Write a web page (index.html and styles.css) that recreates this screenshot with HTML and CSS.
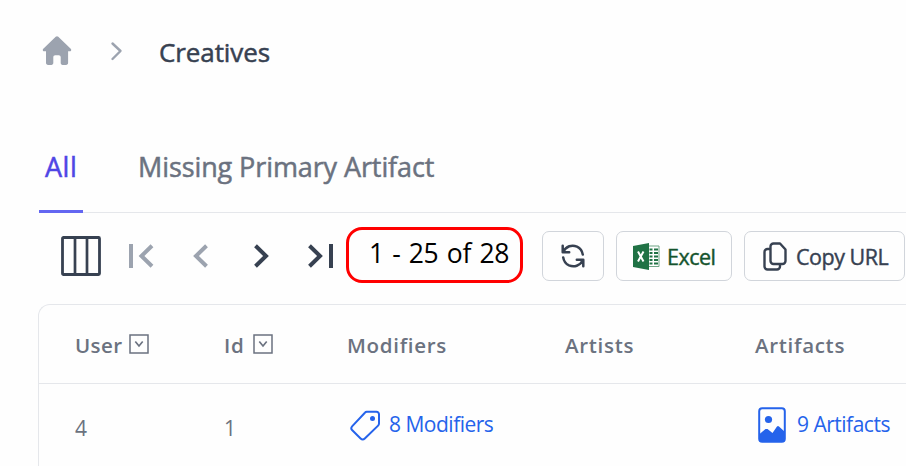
FILE: index.html
```html
<!DOCTYPE html>
<html lang="en">
<head>
<meta charset="utf-8">
<title>Creatives</title>
<link rel="stylesheet" href="styles.css">
</head>
<body>
<nav class="breadcrumb">
  <svg class="home" width="30" height="30" viewBox="0 0 30 30"><path d="M13.700.8a1.900 1.900 0 0 1 2.600 0L28.700 12.700c1 1 .5 2.600-.9 2.600h-1.700v11.500c0 1.300-.8 2.100-2.100 2.100h-3.400c-1.200 0-1.900-.8-1.900-1.900v-5.700c0-1.200-.8-2-1.900-2h-3.600c-1.200 0-1.900.8-1.900 2V27c0 1.100-.8 1.900-1.900 1.900H6.100c-1.300 0-2.100-.8-2.100-2.100V15.300H2.200c-1.400 0-1.900-1.600-.9-2.600z" fill="#9ca3af"/></svg>
  <svg class="crumb-arrow" width="14" height="20" viewBox="0 0 14 20"><path d="M2.500 2.500 10.500 10l-8 8" fill="none" stroke="#9ca3af" stroke-width="2.400" stroke-linecap="round" stroke-linejoin="round"/></svg>
  <span class="crumb">Creatives</span>
</nav>
<div class="tabs">
  <a class="tab tab-active">All</a>
  <a class="tab tab-missing">Missing Primary Artifact</a>
</div>
<div class="toolbar">
  <svg class="columns" width="40" height="40" viewBox="0 0 40 40"><rect x="1.500" y="1.500" width="37" height="37" rx="1" fill="none" stroke="#374151" stroke-width="2.800"/><path d="M14 2v36M26 2v36" stroke="#374151" stroke-width="2.700"/></svg>
  <svg class="first" width="26" height="26" viewBox="0 0 26 26"><path d="M1 1h4v24H1z" fill="#9ca3af"/><path d="M24 2.800 13.500 13l10.500 10.200" fill="none" stroke="#9ca3af" stroke-width="4"/></svg>
  <svg class="prev" width="16" height="26" viewBox="0 0 16 26"><path d="M13.500 2.800 3 13l10.500 10.200" fill="none" stroke="#9ca3af" stroke-width="4"/></svg>
  <svg class="next" width="16" height="26" viewBox="0 0 16 26"><path d="M1.500 2.800 12 13 1.500 23.200" fill="none" stroke="#374151" stroke-width="4"/></svg>
  <svg class="last" width="26" height="26" viewBox="0 0 26 26"><path d="M21 1h4v24h-4z" fill="#374151"/><path d="M1.500 2.800 12 13 1.500 23.200" fill="none" stroke="#374151" stroke-width="4"/></svg>
  <div class="range"><span>1 - 25 of 28</span></div>
  <button class="btn refresh"><svg width="24" height="24" viewBox="0 0 24 24" fill="none" stroke="#374151" stroke-width="2.500" stroke-linecap="round" stroke-linejoin="round"><path d="M1.700 1.700v6.500h6.500M2 8C5 2 11 .5 16 2.600c3.300 1.500 5.200 4.200 5.800 8M22.300 22.300v-6.500h-6.500M22 16c-3 6-9 7.500-14 5.400-3.300-1.500-5.200-4.200-5.800-8"/></svg></button>
  <button class="btn excel"><svg width="27" height="27" viewBox="0 0 27 27"><path d="M15 3h11v20.500H15" fill="#fefefe" stroke="#6fa585" stroke-width="1"/><path d="M16.500 5.500h3v2h-3zm4.500 0h4v2h-4zM16.500 9h3v2h-3zm4.500 0h4v2h-4zM16.500 12.500h3v2h-3zm4.500 0h4v2h-4zM16.500 16h3v2h-3zm4.500 0h4v2h-4zM16.500 19.500h3v2h-3zm4.500 0h4v2h-4z" fill="#207245"/><path d="M0 3 16 0v27L0 24z" fill="#207245"/><path d="m5 8.500 5.500 10M10.500 8.500 5 18.500" stroke="#fff" stroke-width="2"/></svg><span>Excel</span></button>
  <button class="btn copy"><svg width="24" height="29" viewBox="0 0 24 29" fill="none" stroke="#374151" stroke-width="2.400" stroke-linejoin="round" stroke-linecap="round"><path d="M10.500 1.500H17l5.500 6v11.500a3 3 0 0 1-3 3h-9a3 3 0 0 1-3-3V4.500a3 3 0 0 1 3-3zM7 7H4.500a3 3 0 0 0-3 3v14.500a3 3 0 0 0 3 3H14a3 3 0 0 0 3-3V22.500"/></svg><span>Copy URL</span></button>
</div>
<div class="table">
  <div class="row head">
    <div class="cell"><span class="t-user">User</span><svg class="sort" width="20" height="20" viewBox="0 0 20 20" fill="none" stroke="#6b7280"><path d="M1 1h18v18H1z" stroke-width="1.500"/><path d="m6.300 7.500 3.700 4.500 3.700-4.500" stroke-width="1.700"/></svg></div>
    <div class="cell"><span>Id</span><svg class="sort sort-id" width="20" height="20" viewBox="0 0 20 20" fill="none" stroke="#6b7280"><path d="M1 1h18v18H1z" stroke-width="1.500"/><path d="m6.300 7.500 3.700 4.500 3.700-4.500" stroke-width="1.700"/></svg></div>
    <div class="cell"><span>Modifiers</span></div>
    <div class="cell"><span>Artists</span></div>
    <div class="cell"><span>Artifacts</span></div>
  </div>
  <div class="row body">
    <div class="cell num">4</div>
    <div class="cell num">1</div>
    <div class="cell link"><svg class="tag" width="31" height="31" viewBox="0 0 31 31"><path d="M16.800 1.800H26.500a2.500 2.500 0 0 1 2.500 2.500V13.500c0 .8-.3 1.500-.9 2.100L14.800 28.500a3 3 0 0 1-4.200 0L2.300 20.300a3 3 0 0 1 0-4.200L14.900 2.700a2.700 2.700 0 0 1 1.900-.9z" fill="none" stroke="#2563eb" stroke-width="2"/><circle cx="22.500" cy="8.500" r="2.500" fill="#2563eb"/></svg><span class="l-modifiers">8 Modifiers</span></div>
    <div class="cell"></div>
    <div class="cell link"><svg class="photo" width="28" height="36" viewBox="0 0 28 36"><rect x="1.200" y="1.200" width="25.600" height="33.600" rx="3" fill="none" stroke="#2563eb" stroke-width="2"/><circle cx="10.500" cy="12.500" r="3.600" fill="#2563eb"/><path d="M1 27.500 7.500 22l2 0 5 4 4.500-6.500q1-1 2 0l6 5.500v7q0 3-3 3H4q-3 0-3-3z" fill="#2563eb"/></svg><span class="l-artifacts">9 Artifacts</span></div>
  </div>
</div>
</body>
</html>
```
FILE: styles.css
```css
* { box-sizing: border-box; }
body {
  margin: 0;
  width: 906px;
  height: 466px;
  overflow: hidden;
  background: #fefefe;
  font-family: "Open Sans", "Noto Sans", sans-serif;
  color: #374151;
}
svg { display: block; flex: none; }
span { white-space: nowrap; }

.breadcrumb { display: flex; align-items: center; height: 104px; padding-left: 42px; }
.home { margin-top: -2px; }
.crumb-arrow { margin-left: 38px; margin-top: -2px; }
.crumb { margin-left: 35px; font-size: 26px; letter-spacing: -0.1px; -webkit-text-stroke: 0.5px; }

.tabs { display: flex; height: 109px; margin-left: 39px; padding-top: 16px; border-bottom: 1px solid #e5e7eb; }
.tab { height: 93px; font-size: 27px; line-height: 93px; letter-spacing: -0.1px; color: #6b7280; white-space: nowrap; -webkit-text-stroke: 0.5px; }
.tab-active { width: 44px; padding-left: 6px; border-bottom: 3px solid #6366f1; letter-spacing: 0.5px; color: #4f46e5; }
.tab-missing { margin-left: 55px; }

.toolbar { display: flex; align-items: center; height: 86px; padding-left: 61px; }
.first { margin-left: 27px; }
.prev { margin-left: 39px; }
.next { margin-left: 45px; }
.last { margin-left: 38px; }
.range {
  display: flex; align-items: center; flex: none;
  width: 177px; height: 56px; margin: -3px 0 0 12px; padding: 0 0 3px 20px;
  border: 3px solid #ff0000; border-radius: 16px;
  font-size: 26.5px; letter-spacing: -0.2px; word-spacing: 1.500px; color: #000;
}
.btn {
  display: flex; align-items: center; flex: none;
  height: 50px; padding: 0;
  border: 1px solid #d1d5db; border-radius: 7px;
  background: #fefefe; color: #374151;
  font: 21.5px "Open Sans", "Noto Sans", sans-serif;
  letter-spacing: -0.5px;
  -webkit-text-stroke: 0.4px;
}
.refresh { width: 62px; margin-left: 19px; justify-content: center; }
.excel { width: 116px; margin-left: 12px; padding-left: 16px; color: #14532d; }
.excel span { margin-left: 7px; }
.copy { width: 161px; margin-left: 12px; padding-left: 18px; }
.copy span { margin-left: 9px; }

.table { height: 180px; margin: 5px 0 0 38px; border: 1px solid #e5e7eb; border-width: 1px 0 0 1px; border-radius: 12px 0 0 0; }
.row { display: grid; grid-template-columns: 149px 123px 218px 190px 1fr; padding-left: 36px; }
.cell { display: flex; align-items: center; }
.head { height: 79px; padding-top: 2px; border-bottom: 1px solid #e5e7eb; font-size: 20.5px; font-weight: 600; letter-spacing: 0.7px; color: #6b7280; }
.t-user { letter-spacing: 0.4px; }
.sort { margin: -3px 0 0 7px; }
.sort-id { margin-left: 9px; }
.body { height: 86px; font-size: 21px; }
.num { padding-top: 1px; color: #6b7280; }
.link { color: #2563eb; padding-bottom: 4px; letter-spacing: -0.5px; }
.link span { margin-top: -2px; }
.tag { margin-left: 3px; }
.l-modifiers { margin-left: 8px; }
.photo { margin-left: 3px; }
.l-artifacts { margin-left: 11px; }
```
